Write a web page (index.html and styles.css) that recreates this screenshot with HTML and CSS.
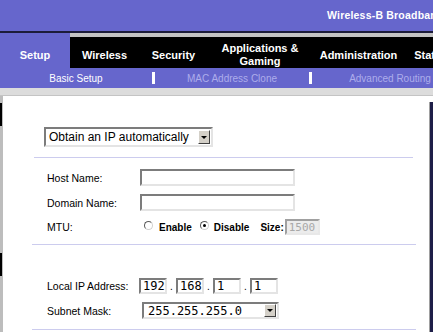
FILE: index.html
```html
<!DOCTYPE html>
<html>
<head>
    <title>Setup - Basic Setup</title>
    <link rel="stylesheet" href="styles.css">
</head>
<body>
    <div class="top"><span class="brand">Wireless-B Broadband Router</span></div>

    <div class="tabs">
        <div class="tab-on">Setup</div>
        <div class="tabbar">
            <div class="tab w1">Wireless</div>
            <div class="tab w2">Security</div>
            <div class="tab w3">Applications &amp;<br>Gaming</div>
            <div class="tab w4">Administration</div>
            <div class="tab w5">Status</div>
        </div>
    </div>

    <div class="subnav">
        <div class="sub on s1">Basic Setup</div>
        <div class="bar"></div>
        <div class="sub s2">MAC Address Clone</div>
        <div class="bar"></div>
        <div class="sub s3">Advanced Routing</div>
    </div>
    <div class="band"></div>

    <div class="main">
        <div class="lstrip">
            <div class="blk b1"></div>
            <div class="blk b2"></div>
        </div>

        <div class="content">
            <div class="select mode">
                <span class="val">Obtain an IP automatically</span>
                <span class="arrow"></span>
            </div>
            <div class="sep sep1"></div>

            <div class="form">
                <div class="row first">
                    <span class="label">Host Name:</span>
                    <input type="text" class="text">
                </div>
                <div class="row">
                    <span class="label">Domain Name:</span>
                    <input type="text" class="text">
                </div>
                <div class="row mtu">
                    <span class="label">MTU:</span>
                    <span class="radio r1"></span>
                    <span class="opt o1">Enable</span>
                    <span class="radio checked"></span>
                    <span class="opt o2">Disable</span>
                    <span class="opt o3">Size:</span>
                    <input type="text" class="size" value="1500" disabled>
                </div>
            </div>
            <div class="sep sep2"></div>

            <div class="form">
                <div class="row ip-row">
                    <span class="label">Local IP Address:</span>
                    <input type="text" class="ip" value="192">
                    <span class="dot">.</span>
                    <input type="text" class="ip" value="168">
                    <span class="dot">.</span>
                    <input type="text" class="ip" value="1">
                    <span class="dot">.</span>
                    <input type="text" class="ip" value="1">
                </div>
                <div class="row mask-row">
                    <span class="label">Subnet Mask:</span>
                    <div class="select mask">
                        <span class="val">255.255.255.0</span>
                        <span class="arrow"></span>
                    </div>
                </div>
            </div>
            <div class="sep sep3"></div>
        </div>

        <div class="rstrip"><div></div></div>
    </div>
</body>
</html>
```

FILE: styles.css
```css
body { margin: 0; width: 433px; height: 332px; overflow: hidden; background: #fff; font-family: "Liberation Sans", Arial, sans-serif; }

/* header */
.top { height: 31px; background: #6666cc; border-bottom: 2px solid #1c1c3a; white-space: nowrap; overflow: hidden; }
.brand { display: block; padding: 9px 0 0 327px; color: #fff; font-weight: bold; font-size: 10.5px; letter-spacing: 0.2px; }

/* main tabs */
.tabs { display: flex; height: 35px; white-space: nowrap; }
.tab-on { width: 70px; flex-shrink: 0; box-sizing: border-box; padding-top: 9px; background: #6666cc; color: #fff; font-weight: bold; font-size: 11px; display: flex; align-items: center; justify-content: center; }
.tabbar { display: flex; flex-shrink: 0; background: #000; border-top: 4px solid #999; border-image: linear-gradient(#c4c4c4, #7a7a7a) 1; }
.tab { flex-shrink: 0; box-sizing: border-box; padding-top: 5px; color: #fff; font-weight: bold; font-size: 11px; line-height: 13px; text-align: center; display: flex; align-items: center; justify-content: center; }
.w1 { width: 69px; }
.w2 { width: 69px; }
.w3 { width: 104px; }
.w4 { width: 93px; }
.w5 { width: 52px; }

/* sub menu */
.subnav { display: flex; align-items: center; height: 20px; background: #6666cc; font-size: 10px; white-space: nowrap; }
.sub { flex-shrink: 0; text-align: center; color: #adadeb; }
.sub.on { color: #fff; }
.s1 { width: 152px; }
.s2 { width: 154px; }
.s3 { width: 156px; }
.bar { flex-shrink: 0; width: 3px; height: 12px; background: #fff; }
.band { height: 7px; background: #dcdcdc; border-bottom: 1px solid #c4c4c4; }

/* page body */
.main { display: flex; height: 236px; }
.lstrip { width: 3px; flex-shrink: 0; background: #bdbdbd; display: flex; flex-direction: column; }
.blk { width: 2px; height: 23px; background: #000; }
.b1 { margin-top: 7px; }
.b2 { margin-top: 127px; }
.rstrip { width: 4px; flex-shrink: 0; padding-top: 6px; box-sizing: border-box; }
.rstrip div { height: 100%; border-left: 1px solid #a0a0a0; background: #1e1e48; }
.content { flex: 1; padding-top: 31px; }

.select { display: flex; align-items: center; box-sizing: border-box; border: 2px solid; border-color: #7c7c7c #e4e4e4 #e4e4e4 #7c7c7c; background: #fff; }
.select .val { padding-left: 3px; }
.arrow { margin-left: auto; margin-right: 1px; width: 12px; box-sizing: border-box; background: #d4d0c8; border: 1px solid; border-color: #fff #404040 #404040 #fff; display: flex; align-items: center; justify-content: center; }
.arrow::after { content: ""; border-left: 3px solid transparent; border-right: 3px solid transparent; border-top: 3px solid #000; }
.mode { width: 169px; height: 20px; margin-left: 41px; font-size: 12px; }
.mode .arrow { height: 14px; }

.sep { height: 1px; background: #ccccee; }
.sep1 { margin: 10px 16px 0 31px; }
.sep2 { margin: 9px 13px 0 29px; }
.sep3 { margin: 10px 13px 0 29px; }

.form { padding-left: 44px; }
.row { display: flex; align-items: center; height: 17px; margin-top: 8px; }
.row.first { margin-top: 11px; }
.label { width: 93px; flex-shrink: 0; font-size: 10.5px; color: #000; }
input { margin: 0; padding: 0; box-sizing: border-box; border: 2px solid; border-color: #7c7c7c #e4e4e4 #e4e4e4 #7c7c7c; background: #fff; outline: none; }
.text { width: 155px; height: 17px; }

.mtu { height: 16px; }
.radio { width: 9px; height: 9px; flex-shrink: 0; box-sizing: border-box; border-radius: 50%; border: 1px solid; border-color: #5a5a5a #d0d0d0 #d0d0d0 #5a5a5a; background: #fff; margin-bottom: 3px; display: flex; align-items: center; justify-content: center; }
.r1 { margin-left: 4px; }
.radio.checked::after { content: ""; width: 3px; height: 3px; background: #000; border-radius: 50%; }
.opt { font-size: 10px; font-weight: bold; color: #000; }
.o1 { margin: 0 8px 0 6px; }
.o2 { margin: 0 11px 0 5px; }
.size { width: 35px; height: 16px; margin-left: 1px; background: #ececec; color: #a8a8a8; font-family: "DejaVu Sans Mono", monospace; font-size: 11px; padding-left: 2px; border-color: #a0a0a0 #e8e8e8 #e8e8e8 #a0a0a0; }

.ip-row { margin-top: 33px; height: 16px; }
.ip { width: 28px; height: 16px; padding-left: 2px; font-family: "DejaVu Sans Mono", monospace; font-size: 12px; color: #000; }
.ip-row .label { width: 92px; }
.dot { width: 9px; text-align: center; font-size: 10px; align-self: flex-end; line-height: 14px; }
.mask-row { height: 17px; }
.mask { width: 137px; height: 17px; margin-left: 2px; font-family: "DejaVu Sans Mono", monospace; font-size: 12px; }
.mask .val { padding-left: 4px; }
.mask .arrow { height: 13px; }
```
